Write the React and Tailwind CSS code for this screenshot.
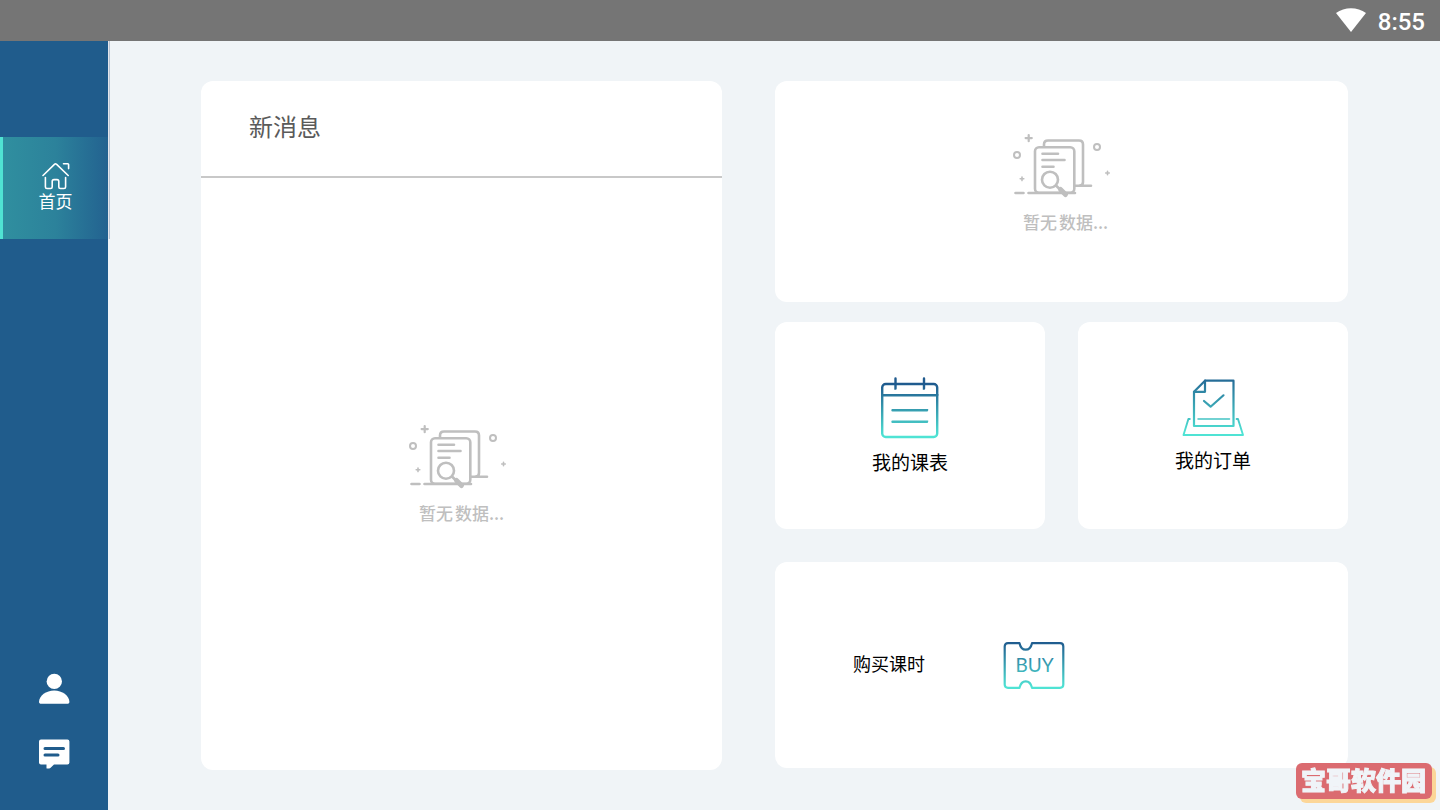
import { useState } from 'react';

const GRADIENT_TOP = '#1f5a8e';
const GRADIENT_BOTTOM = '#4fe3d4';

const IconGradient = ({ id, y1, y2 }) => (
  <defs>
    <linearGradient id={id} gradientUnits="userSpaceOnUse" x1="0" y1={y1} x2="0" y2={y2}>
      <stop offset="0" stopColor={GRADIENT_TOP} />
      <stop offset="1" stopColor={GRADIENT_BOTTOM} />
    </linearGradient>
  </defs>
);

const HomeIcon = () => (
  <svg width="28" height="28" viewBox="0 0 28 28" fill="none" stroke="#fff" strokeWidth="1.6" strokeLinecap="round" strokeLinejoin="round" aria-hidden="true">
    <path d="M1 13.5 12.7 2.2a1.2 1.2 0 0 1 1.7 0L26.2 13.5" />
    <path d="M21.5 1.8h4.300q.8 0 .8.8v4" />
    <path d="M3.4 15.5v9.4q0 1.6 1.6 1.6h3.6q1.6 0 1.6-1.6v-5.5q0-1.8 1.8-1.8h3q1.8 0 1.8 1.8v5.5q0 1.6 1.6 1.6h3.6q1.6 0 1.6-1.6v-9.4" />
  </svg>
);

const UserIcon = () => (
  <svg width="32" height="32" viewBox="0 0 32 32" fill="#fff" aria-hidden="true">
    <circle cx="16.3" cy="8.4" r="7.7" />
    <path d="M16.2 17.5c8 0 15 5 15.2 11.3 0 1.4-.8 2-2.2 2H3.2c-1.4 0-2.2-.6-2.2-2 .2-6.3 7.2-11.3 15.2-11.3Z" />
  </svg>
);

const ChatIcon = () => (
  <svg width="32" height="30" viewBox="0 0 32 30" aria-hidden="true">
    <path fill="#fff" d="M3 .6h26.4q2 0 2 2v20.8q0 2-2 2H16L12.6 28.8q-.6.7-1.5.7H9q-.5 0-.5-.6v-3.5H3q-2 0-2-2V2.6q0-2 2-2Z" />
    <path stroke="#205c8c" strokeWidth="3" strokeLinecap="round" d="M7 9.5h18.5M7 16h13" />
  </svg>
);

const WifiIcon = () => (
  <svg width="30" height="25" viewBox="0 0 30 25" fill="#fff" aria-hidden="true">
    <path d="M0 5C8.500-1.500 21.500-1.500 30 5L15 24Z" />
  </svg>
);

const CalendarIcon = () => (
  <svg width="62" height="64" viewBox="0 0 62 64" fill="none" stroke="url(#calendar-line)" strokeWidth="2.4" strokeLinecap="round" aria-hidden="true">
    <IconGradient id="calendar-line" y1="8" y2="60" />
    <rect x="3.2" y="8" width="55" height="53" rx="3.5" />
    <path d="M3.2 19.2h55v.01M13.5 34.3h34.5v.01M13.5 45.700h34.500v.01" />
    <path d="M16.500 2.500v10v.01h.01M45 2.500v10v.01h.01" />
  </svg>
);

const OrderIcon = () => (
  <svg width="62" height="60" viewBox="0 0 62 60" fill="none" stroke="url(#order-line)" strokeWidth="2.2" strokeLinecap="round" strokeLinejoin="round" aria-hidden="true">
    <IconGradient id="order-line" y1="-6" y2="55" />
    <path d="M23 2.700h28.500V48H12V13.800Z" />
    <path d="M23 2.700v11.100H12" />
    <path d="M22 23l6.600 5.700L41.500 17.300" />
    <path strokeWidth="1.500" d="M16 41h31.500v.01" />
    <path strokeWidth="1.900" d="M7.800 41H6.400L1.500 57h59.500L56 41h-1.400" />
  </svg>
);

const BuyIcon = () => (
  <svg width="62" height="48" viewBox="0 0 62 48" aria-hidden="true">
    <IconGradient id="buy-line" y1="1" y2="46" />
    <path
      fill="none"
      stroke="url(#buy-line)"
      strokeWidth="2.2"
      strokeLinejoin="round"
      d="M5 2.200h11.500c1 4.500 3 6.500 6.200 6.500s5.300-2 6.300-6.500h28q3.300 0 3.300 3.300v38q0 3.300-3.300 3.300H29c-1-4.500-3-6.500-6.300-6.500s-5.200 2-6.200 6.500H5q-3.300 0-3.300-3.300v-38q0-3.300 3.300-3.300Z"
    />
    <text x="31.500" y="30.500" textAnchor="middle" fill="url(#buy-line)" fontFamily="Lato, sans-serif" fontSize="19">
      BUY
    </text>
  </svg>
);

const EmptyState = () => (
  <div className="flex flex-col items-center text-[#bfbfbf]">
    <svg width="106" height="68" viewBox="1 0 106 68" fill="none" stroke="currentColor" strokeWidth="2.6" strokeLinecap="round" strokeLinejoin="round" aria-hidden="true">
      {/* Pages */}
      <path d="M32 13v-1.500q0-4 4-4h31q4 0 4 4V49q0 3.500-3.500 3.500M63 52.700h16" />
      <rect x="23" y="14.300" width="39.300" height="45.400" rx="4" />
      <path d="M30.500 20.700H46M30.500 27H52.500M30.500 33.700H41.500" />
      {/* Ground line */}
      <path d="M3.500 60H11.500M16.500 60H63" />
      {/* Magnifier */}
      <circle cx="38" cy="46.700" r="8" fill="#fff" />
      <path d="M44 52.500l3 3" />
      <path strokeWidth="5" d="M48.500 56.500l5 5" />
      {/* Sparkles */}
      <circle cx="5" cy="22" r="3" strokeWidth="2" />
      <circle cx="85" cy="14" r="3" strokeWidth="2" />
      <path strokeWidth="2.2" d="M16.700 2v6.200M13.600 5.100h6.200" />
      <path strokeWidth="1.600" d="M10 44v3.600M8.200 45.800h3.600M95.500 38.200v3.600M93.700 40h3.600" />
    </svg>
    <p className="mt-[9px] font-['Noto_Sans_CJK_SC',sans-serif] text-[17px] leading-6 font-medium">
      <span className="mr-0.5">暂无</span>数据...
    </p>
  </div>
);

const Sidebar = ({ active, onSelect }) => (
  <nav className="relative flex w-[108px] shrink-0 flex-col bg-[#205c8c] pt-24 pb-[41px]">
    <button
      type="button"
      onClick={() => onSelect('home')}
      aria-current={active === 'home' ? 'page' : undefined}
      className="flex h-[102px] flex-col items-center justify-center border-l-[3px] border-[#50e3d3] bg-linear-to-r from-[#308f9f] via-[#2c829b] to-[#236290] text-white"
    >
      <HomeIcon />
      <span className="text-[17px] leading-6">首页</span>
    </button>
    <div className="mt-auto flex flex-col items-center gap-[34px]">
      <button type="button" aria-label="我的" onClick={() => onSelect('user')}>
        <UserIcon />
      </button>
      <button type="button" aria-label="消息" onClick={() => onSelect('chat')}>
        <ChatIcon />
      </button>
    </div>
    <div className="absolute top-0 left-full h-[198px] w-0.5 border-r border-[#b9c4d3] bg-[#e4e6ec]" />
  </nav>
);

const App = () => {
  const [active, setActive] = useState('home');

  return (
    <div className="flex min-h-screen flex-col bg-[#f0f4f7] font-['Roboto','Noto_Sans_CJK_SC',sans-serif] text-black">
      {/* Status bar */}
      <header className="flex h-[41px] shrink-0 items-center justify-end gap-3 bg-[#757575] pr-[15px] text-white">
        <WifiIcon />
        <time className="pt-0.5 text-2xl leading-8 font-medium">8:55</time>
      </header>

      <div className="flex grow">
        <Sidebar active={active} onSelect={setActive} />

        <main className="flex grow gap-[53px] pt-10 pr-[92px] pb-10 pl-[93px]">
          {/* Messages */}
          <section className="flex flex-[521] flex-col rounded-xl bg-white">
            <h1 className="border-b-2 border-[#c8c8c8] px-12 pt-[29px] pb-[30px] text-2xl leading-9 text-[#5a5a5a]">新消息</h1>
            <div className="flex grow items-center justify-center">
              <EmptyState />
            </div>
          </section>

          <div className="flex flex-[573] flex-col pb-0.5">
            <section className="flex flex-[221] items-center justify-center rounded-xl bg-white">
              <div className="pb-4 pl-2">
                <EmptyState />
              </div>
            </section>

            <div className="mt-5 flex flex-[206] gap-[33px]">
              <button type="button" className="flex flex-1 flex-col items-center justify-center gap-2.5 rounded-xl bg-white pt-0.5">
                <CalendarIcon />
                <span className="text-[19px] leading-7">我的课表</span>
              </button>
              <button type="button" className="flex flex-1 flex-col items-center justify-center gap-2.5 rounded-xl bg-white pt-0.5">
                <OrderIcon />
                <span className="text-[19px] leading-7">我的订单</span>
              </button>
            </div>

            <button type="button" className="mt-[33px] flex flex-[206] items-center gap-[78px] rounded-xl bg-white pl-[78px]">
              <span className="text-lg leading-7">购买课时</span>
              <BuyIcon />
            </button>
          </div>
        </main>
      </div>

      {/* Site badge */}
      <div className="fixed right-2 bottom-[11px] rounded-md bg-[#db6b70] pt-px pr-1.5 pl-[5px] text-[25px] leading-[35px] font-black text-[#f0f4f8] shadow-[4px_4px_0_#fcd698] [-webkit-text-stroke:1px_#f0f4f8]">
        宝哥软件园
      </div>
    </div>
  );
};

export default App;
